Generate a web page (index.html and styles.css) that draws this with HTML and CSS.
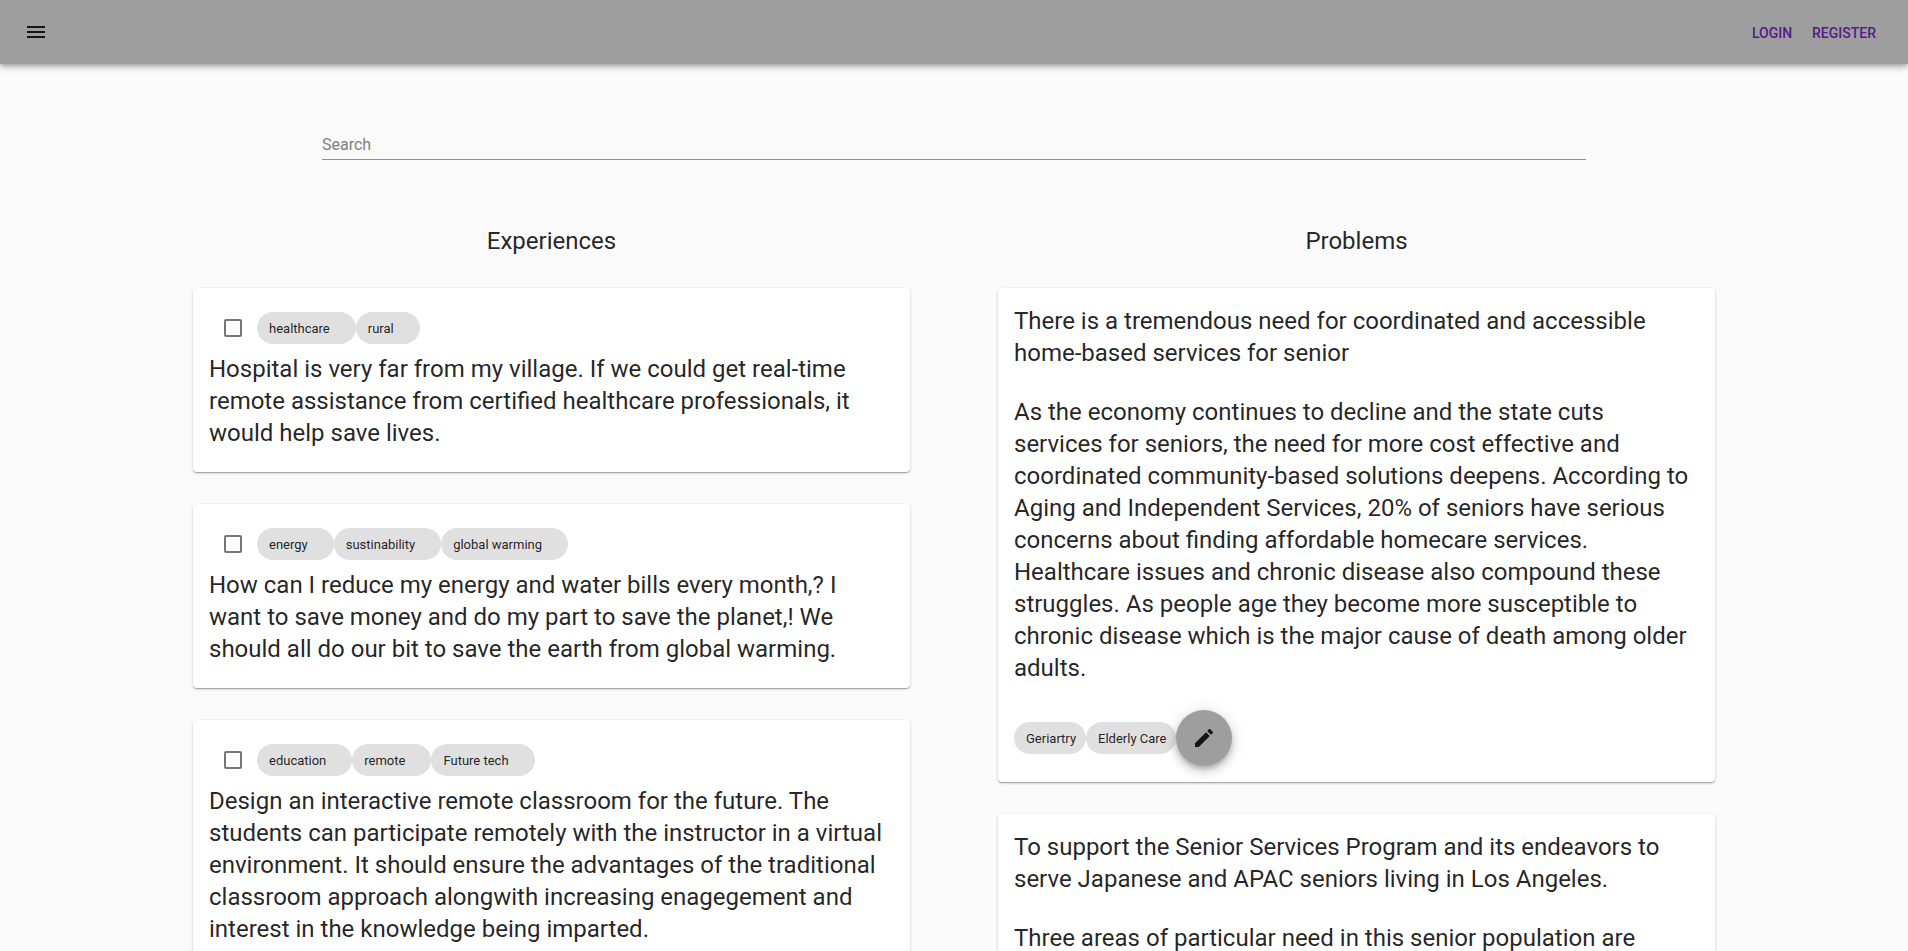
FILE: index.html
```html
<!DOCTYPE html>
<html lang="en">
<head>
  <meta charset="utf-8">
  <meta name="viewport" content="width=device-width, initial-scale=1">
  <title>Experiences and Problems</title>
  <link rel="stylesheet" href="styles.css">
</head>
<body>
  <header class="app-bar">
    <button class="menu-button" type="button" aria-label="Menu">
      <svg class="icon" viewBox="0 0 24 24" aria-hidden="true"><path d="M3 18h18v-2H3v2zm0-5h18v-2H3v2zm0-7v2h18V6H3z"/></svg>
    </button>
    <nav class="account-nav">
      <a class="nav-link" href="#login">Login</a>
      <a class="nav-link" href="#register">Register</a>
    </nav>
  </header>

  <main>
    <form class="search" role="search">
      <input class="search-input" type="text" placeholder="Search" aria-label="Search">
    </form>

    <div class="columns">
      <section class="column">
        <h2 class="column-title">Experiences</h2>

        <article class="card">
          <div class="card-head">
            <input class="checkbox" type="checkbox" aria-label="Select hospital experience">
            <div class="chips">
              <span class="chip chip-wide">healthcare</span>
              <span class="chip chip-wide">rural</span>
            </div>
          </div>
          <p class="card-text">Hospital is very far from my village. If we could get real-time remote assistance from certified healthcare professionals, it would help save lives.</p>
        </article>

        <article class="card">
          <div class="card-head">
            <input class="checkbox" type="checkbox" aria-label="Select energy experience">
            <div class="chips">
              <span class="chip chip-wide">energy</span>
              <span class="chip chip-wide">sustinability</span>
              <span class="chip chip-wide">global warming</span>
            </div>
          </div>
          <p class="card-text">How can I reduce my energy and water bills every month,? I want to save money and do my part to save the planet,! We should all do our bit to save the earth from global warming.</p>
        </article>

        <article class="card">
          <div class="card-head">
            <input class="checkbox" type="checkbox" aria-label="Select classroom experience">
            <div class="chips">
              <span class="chip chip-wide">education</span>
              <span class="chip chip-wide">remote</span>
              <span class="chip chip-wide">Future tech</span>
            </div>
          </div>
          <p class="card-text">Design an interactive remote classroom for the future. The students can participate remotely with the instructor in a virtual environment. It should ensure the advantages of the traditional classroom approach alongwith increasing enagegement and interest in the knowledge being imparted.</p>
        </article>
      </section>

      <section class="column">
        <h2 class="column-title">Problems</h2>

        <article class="card problem">
          <p class="card-text">There is a tremendous need for coordinated and accessible home-based services for senior</p>
          <p class="card-text">As the economy continues to decline and the state cuts services for seniors, the need for more cost effective and coordinated community-based solutions deepens. According to Aging and Independent Services, 20% of seniors have serious concerns about finding affordable homecare services. Healthcare issues and chronic disease also compound these struggles. As people age they become more susceptible to chronic disease which is the major cause of death among older adults.</p>
          <div class="chips">
            <span class="chip">Geriartry</span>
            <span class="chip">Elderly Care</span>
            <button class="fab" type="button" aria-label="Edit">
              <svg class="icon" viewBox="0 0 24 24" aria-hidden="true"><path d="M3 17.25V21h3.75L17.81 9.94l-3.75-3.75L3 17.25zM20.71 7.04c.39-.39.39-1.02 0-1.41l-2.34-2.34c-.39-.39-1.02-.39-1.41 0l-1.83 1.83 3.75 3.75 1.83-1.83z"/></svg>
            </button>
          </div>
        </article>

        <article class="card problem">
          <p class="card-text">To support the Senior Services Program and its endeavors to serve Japanese and APAC seniors living in Los Angeles.</p>
          <p class="card-text">Three areas of particular need in this senior population are</p>
        </article>
      </section>
    </div>
  </main>
</body>
</html>
```
FILE: styles.css
```css
*,
*::before,
*::after {
  box-sizing: border-box;
}

body {
  margin: 0;
  background: #fafafa;
  color: rgba(0, 0, 0, 0.87);
  font-family: Roboto, "Liberation Sans", sans-serif;
  font-size: 16px;
}

.icon {
  display: block;
  width: 24px;
  height: 24px;
  fill: currentColor;
}

/* App bar */
.app-bar {
  display: flex;
  align-items: center;
  justify-content: space-between;
  height: 64px;
  padding: 0 24px;
  background: #9e9e9e;
  box-shadow:
    0 2px 4px -1px rgba(0, 0, 0, 0.2),
    0 4px 5px 0 rgba(0, 0, 0, 0.14),
    0 1px 10px 0 rgba(0, 0, 0, 0.12);
}

.menu-button {
  padding: 0;
  border: 0;
  background: none;
  color: rgba(0, 0, 0, 0.87);
  cursor: pointer;
}

.account-nav {
  display: flex;
}

.nav-link {
  min-width: 64px;
  padding: 7px 8px 5px;
  color: #551a8b;
  font-size: 14px;
  font-weight: 500;
  line-height: 24px;
  text-align: center;
  text-decoration: none;
  text-transform: uppercase;
}

/* Search */
.search {
  padding: 64px 322px 65px;
}

.search-input {
  display: block;
  width: 100%;
  height: 32px;
  padding: 2px 0 0;
  border: 0;
  border-bottom: 1px solid rgba(0, 0, 0, 0.42);
  border-radius: 0;
  outline: 0;
  background: none;
  color: inherit;
  font: inherit;
}

.search-input::placeholder {
  color: #7f7f7f;
  opacity: 1;
}

/* Two-column board */
.columns {
  display: grid;
  grid-template-columns: 1fr 1fr;
  align-items: start;
  gap: 88px;
  padding: 0 193px 32px;
}

.column {
  display: flex;
  flex-direction: column;
  gap: 32px;
}

.column-title {
  margin: 0 0 -1px;
  font-size: 24px;
  font-weight: 400;
  line-height: 32px;
  text-align: center;
}

.card {
  padding: 16px 16px 23px;
  border-radius: 4px;
  background: #fff;
  box-shadow:
    0 1px 3px 0 rgba(0, 0, 0, 0.2),
    0 1px 1px 0 rgba(0, 0, 0, 0.14),
    0 2px 1px -1px rgba(0, 0, 0, 0.12);
}

.card-head {
  display: flex;
  align-items: center;
  gap: 15px;
  height: 48px;
  padding-left: 15px;
}

.card-text {
  margin: 0;
  padding: 1px 4px 0 0;
  font-size: 24px;
  line-height: 32px;
}

.problem {
  display: flex;
  flex-direction: column;
  gap: 26px;
  padding-bottom: 16px;
}

.checkbox {
  appearance: none;
  width: 18px;
  height: 18px;
  margin: 0;
  border: 2px solid #757575;
  border-radius: 2px;
  background: none;
}

.checkbox:checked {
  background: #757575;
}

.chips {
  display: flex;
  align-items: center;
}

.chip {
  height: 32px;
  padding: 1px 10px 0 12px;
  border-radius: 16px;
  background: #e0e0e0;
  font-size: 13px;
  line-height: 32px;
  white-space: nowrap;
}

.chip-wide {
  padding-right: 26px;
}

.fab {
  display: grid;
  place-items: center;
  width: 56px;
  height: 56px;
  padding: 0;
  border: 0;
  border-radius: 50%;
  background: #9e9e9e;
  color: rgba(0, 0, 0, 0.87);
  box-shadow:
    0 3px 5px -1px rgba(0, 0, 0, 0.2),
    0 6px 10px 0 rgba(0, 0, 0, 0.14),
    0 1px 18px 0 rgba(0, 0, 0, 0.12);
  cursor: pointer;
}
```
